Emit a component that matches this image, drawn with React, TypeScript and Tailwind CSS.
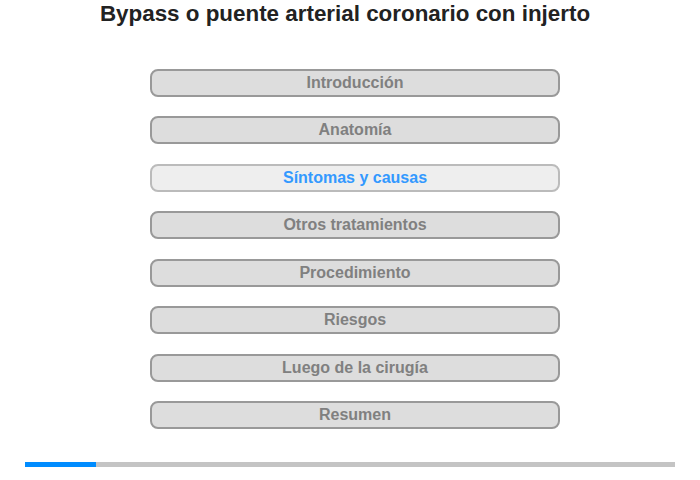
const sections = [
  "Introducción",
  "Anatomía",
  "Síntomas y causas",
  "Otros tratamientos",
  "Procedimiento",
  "Riesgos",
  "Luego de la cirugía",
  "Resumen",
];

const active = 2;

export default function App() {
  return (
    <div
      className="flex h-[480px] w-[700px] flex-col bg-white"
      style={{ fontFamily: '"Liberation Sans", Arial, sans-serif' }}
    >
      <h1 className="pr-[10px] pt-[1px] text-center text-[22.4px] font-bold leading-[26px] text-[#222]">
        Bypass o puente arterial coronario con injerto
      </h1>
      <div className="ml-[150px] mt-[42px] flex flex-col gap-[19.45px]">
        {sections.map((s, i) =>
          i === active ? (
            <button
              key={s}
              className="h-[28px] w-[410px] rounded-[8px] border-2 border-[#bbbbbb] bg-[#eeeeee] text-[16px] font-bold leading-none text-[#3399ff]"
            >
              {s}
            </button>
          ) : (
            <button
              key={s}
              className="h-[28px] w-[410px] rounded-[8px] border-2 border-[#999999] bg-[#dddddd] text-[16px] font-bold leading-none text-[#808080]"
            >
              {s}
            </button>
          )
        )}
      </div>
      <div className="mx-[25px] mt-[33px] flex h-[5px] bg-[#c4c4c4]">
        <div className="h-full w-[71px] bg-[#008cff]" />
      </div>
    </div>
  );
}
